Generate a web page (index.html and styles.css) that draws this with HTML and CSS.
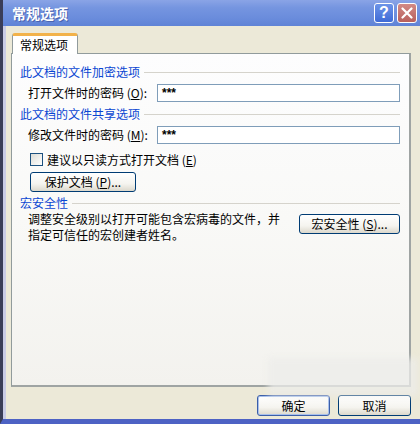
FILE: index.html
```html
<!DOCTYPE html>
<html lang="zh-CN">
<head>
<meta charset="utf-8">
<title>常规选项</title>
<link rel="stylesheet" href="styles.css">
</head>
<body>
<div class="window">
  <div class="titlebar">
    <span class="title">常规选项</span>
    <div class="tbtns">
      <span class="tb help">?</span>
      <span class="tb close"><svg width="12" height="12" viewBox="0 0 12 12"><path d="M1.5 1.5 L10.5 10.5 M10.5 1.5 L1.5 10.5" stroke="#fff" stroke-width="2.2" stroke-linecap="round"/></svg></span>
    </div>
  </div>
  <div class="client">
    <div class="tabs"><div class="tab">常规选项</div></div>
    <div class="panel">
      <div class="group"><span class="gtitle">此文档的文件加密选项</span><span class="gline"></span></div>
      <div class="field">
        <span class="label">打开文件时的密码 (<u>O</u>):</span>
        <div class="input">***</div>
      </div>
      <div class="group g2"><span class="gtitle">此文档的文件共享选项</span><span class="gline"></span></div>
      <div class="field">
        <span class="label">修改文件时的密码 (<u>M</u>):</span>
        <div class="input">***</div>
      </div>
      <div class="check"><span class="box"></span><span>建议以只读方式打开文档 (<u>E</u>)</span></div>
      <div class="btnrow"><button class="btn protect">保护文档 (<u>P</u>)...</button></div>
      <div class="group g3"><span class="gtitle">宏安全性</span><span class="gline"></span></div>
      <div class="macro">
        <div class="mtext">
          <div class="mline">调整安全级别以打开可能包含宏病毒的文件，并</div>
          <div class="mline">指定可信任的宏创建者姓名。</div>
        </div>
        <button class="btn msec">宏安全性 (<u>S</u>)...</button>
      </div>
    </div>
    <div class="actions">
      <button class="btn dlg ok">确定</button>
      <button class="btn dlg">取消</button>
    </div>
  </div>
  <div class="watermark"></div>
</div>
</body>
</html>
```
FILE: styles.css
```css
* { box-sizing: border-box; }
html, body { margin: 0; padding: 0; background: #ece9d8; }
body {
  font-family: "Noto Sans CJK SC", "Liberation Sans", sans-serif;
  font-size: 12px;
  color: #000;
}
.window {
  position: relative;
  width: 420px;
  height: 424px;
  display: flex;
  flex-direction: column;
  border-left: 3px solid #3a3d58;
  border-bottom: 5px solid #4d62c4;
  background: #ece9d8;
  overflow: hidden;
}
.titlebar {
  height: 26px;
  margin-left: -3px;
  padding: 0 3px 0 9px;
  display: flex;
  align-items: center;
  justify-content: space-between;
  background: linear-gradient(#8aa4e6 0%, #7595e0 30%, #6a8cdc 70%, #5f83d6 100%);
  border-left: 3px solid #3a3d58;
}
.title {
  color: #fff;
  font-weight: bold;
  font-size: 14px;
  line-height: 16px;
  text-shadow: 1px 1px 0 #4a64b0;
}
.tbtns { display: flex; gap: 3px; }
.tb {
  width: 20px;
  height: 20px;
  border: 1px solid #fff;
  border-radius: 3px;
  display: flex;
  align-items: center;
  justify-content: center;
  color: #fff;
}
.help {
  background: linear-gradient(#6d94e8, #3f6bd6);
  font-family: "Liberation Sans", sans-serif;
  font-weight: bold;
  font-size: 16px;
}
.close {
  background: linear-gradient(#d28a86, #b8605c);
}
.client {
  flex: 1;
  display: flex;
  flex-direction: column;
  border-left: 3px solid #c9cbe6;
  padding: 7px 0 0 5px;
}
.tabs { display: flex; position: relative; z-index: 1; margin-left: 1px; }
.tab {
  width: 66px;
  height: 21px;
  background: #fff;
  border: 1px solid #919b9c;
  border-top: 3px solid #f2b24a;
  border-bottom: none;
  border-radius: 3px 3px 0 0;
  padding-left: 7px;
  line-height: 17px;
  margin-bottom: -1px;
}
.panel {
  width: 400px;
  height: 334px;
  border: 1px solid #919b9c;
  border-right: 2px solid #9fa4a3;
  border-bottom: 2px solid #9fa4a3;
  background: linear-gradient(#fdfdfe 0%, #f9f9f7 50%, #f3f2ee 100%);
  padding: 10px 9px 0 8px;
  display: flex;
  flex-direction: column;
}
.group {
  height: 16px;
  display: flex;
  align-items: center;
  gap: 4px;
}
.gtitle { color: #0a46d2; line-height: 16px; white-space: nowrap; }
.gline { flex: 1; height: 1px; background: #d5d3cc; }
.g2 { margin-top: 4px; }
.g3 { margin-top: 3px; }
.field {
  margin-top: 4px;
  height: 18px;
  display: flex;
  align-items: center;
  padding-left: 8px;
}
.label { width: 129px; line-height: 16px; white-space: nowrap; }
.input {
  flex: 1;
  height: 18px;
  border: 1px solid #7f9db9;
  background: #fff;
  padding-left: 4px;
  font-family: "Liberation Sans", sans-serif;
  font-size: 12px;
  line-height: 17px;
  font-weight: bold;
}
.check {
  margin-top: 7px;
  height: 16px;
  display: flex;
  align-items: center;
  gap: 4px;
  padding-left: 10px;
}
.box {
  width: 13px;
  height: 13px;
  border: 1px solid #1c5180;
  background: linear-gradient(135deg, #dcdcd6, #fff);
}
.btnrow { margin-top: 5px; padding-left: 10px; display: flex; }
.btn {
  font-family: "Noto Sans CJK SC", "Liberation Sans", sans-serif;
  font-size: 12px;
  color: #000;
  height: 20px;
  border: 1px solid #003c74;
  border-radius: 3px;
  background: linear-gradient(#ffffff 0%, #f5f4ef 60%, #dcd8cc 100%);
  padding: 0;
  line-height: 16px;
  text-align: center;
}
.protect { width: 106px; }
.macro {
  margin-top: 0;
  display: flex;
  align-items: flex-start;
  padding-left: 8px;
}
.mtext { width: 271px; display: flex; flex-direction: column; }
.mline { height: 16px; line-height: 16px; white-space: nowrap; }
.msec { width: 101px; margin-top: 3px; }
.actions {
  margin-top: 8px;
  width: 400px;
  display: flex;
  justify-content: flex-end;
  gap: 8px;
}
.dlg { width: 73px; height: 21px; }
.ok { border-color: #3b5ea8; box-shadow: inset 0 0 0 1px #a8c0ec; }
.watermark {
  position: absolute;
  left: 265px;
  top: 358px;
  width: 150px;
  height: 38px;
  background: rgba(236, 236, 234, 0.75);
  filter: blur(3px);
}
```
